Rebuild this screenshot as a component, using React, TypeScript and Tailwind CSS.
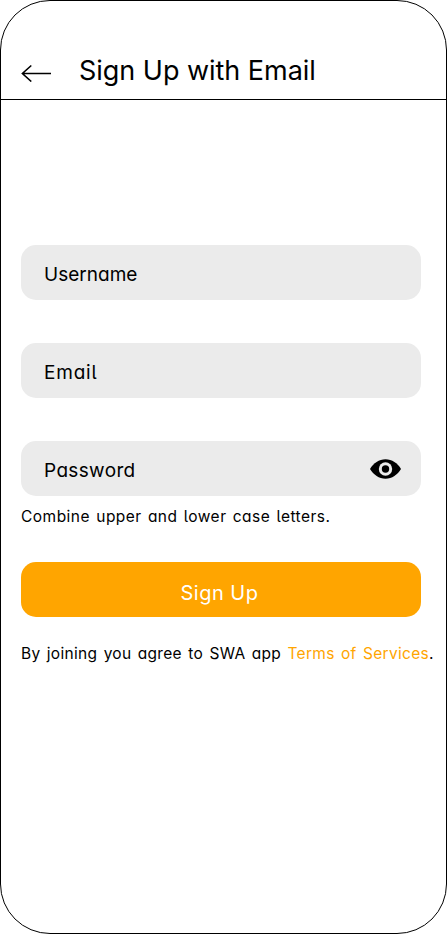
const bodyFont = "font-['Inter','Noto_Sans',sans-serif] [font-feature-settings:'cv11','cv05']";

function BackArrow() {
  return (
    <svg className="h-[18px] w-[30px]" viewBox="0 0 30 18" fill="none" stroke="black" strokeWidth="1.6">
      <path d="M10.300 1.500 1.400 9.500l8.900 8M1.400 9.500H30" />
    </svg>
  );
}

function EyeIcon() {
  return (
    <svg className="h-5 w-[31px]" viewBox="0 0 31 20">
      <path d="M0 10C3.500 4.200 9 .3 15.500 .3S27.500 4.200 31 10C27.500 15.800 22 19.700 15.500 19.700S3.500 15.800 0 10Z" />
      <circle cx="15.500" cy="10" r="6.700" fill="#ebebeb" />
      <circle cx="15.500" cy="10" r="3.700" />
    </svg>
  );
}

function Field({ label, spacing, eye }: { label: string; spacing: string; eye?: boolean }) {
  return (
    <div className="flex h-[55px] w-[400px] items-center justify-between rounded-[15px] bg-[#ebebeb] pr-5 pl-[23px]">
      <span className={`pt-1 text-[19px] leading-6 ${spacing}`}>{label}</span>
      {eye && <EyeIcon />}
    </div>
  );
}

export default function App() {
  return (
    <main className={`h-[934px] w-[447px] overflow-hidden rounded-[50px] border border-black bg-white text-black ${bodyFont}`}>
      <header className="flex h-[99px] items-start border-b border-black pl-5">
        <div className="pt-[63px]"><BackArrow /></div>
        <h1 className="mt-[52px] ml-7 whitespace-nowrap font-['Inter',sans-serif] text-[27px] leading-9 font-normal tracking-[-0.03px] [font-feature-settings:normal]">Sign Up with Email</h1>
      </header>
      <form className="flex flex-col pt-[145px] pl-5">
        <div className="flex flex-col gap-[43px]">
          <Field label="Username" spacing="tracking-[0.02px]" />
          <Field label="Email" spacing="tracking-[0.8px]" />
          <Field label="Password" spacing="tracking-[0.35px]" eye />
        </div>
        <p className="mt-[11px] whitespace-nowrap text-[15.500px] leading-5 tracking-[0.480px] [word-spacing:1.400px]">Combine upper and lower case letters.</p>
        <button type="button" className="mt-[35px] h-[55px] w-[400px] rounded-[15px] bg-[#ffa500] pt-[6px] pr-[3px] text-[20px] leading-6 tracking-[0.5px] text-white">Sign Up</button>
        <p className="mt-[27px] whitespace-nowrap text-[15.500px] leading-5 tracking-[0.300px] [word-spacing:1.700px]">
          By joining you agree to SWA app <span className="text-[#ffa500]">Terms of Services</span>.
        </p>
      </form>
    </main>
  );
}
